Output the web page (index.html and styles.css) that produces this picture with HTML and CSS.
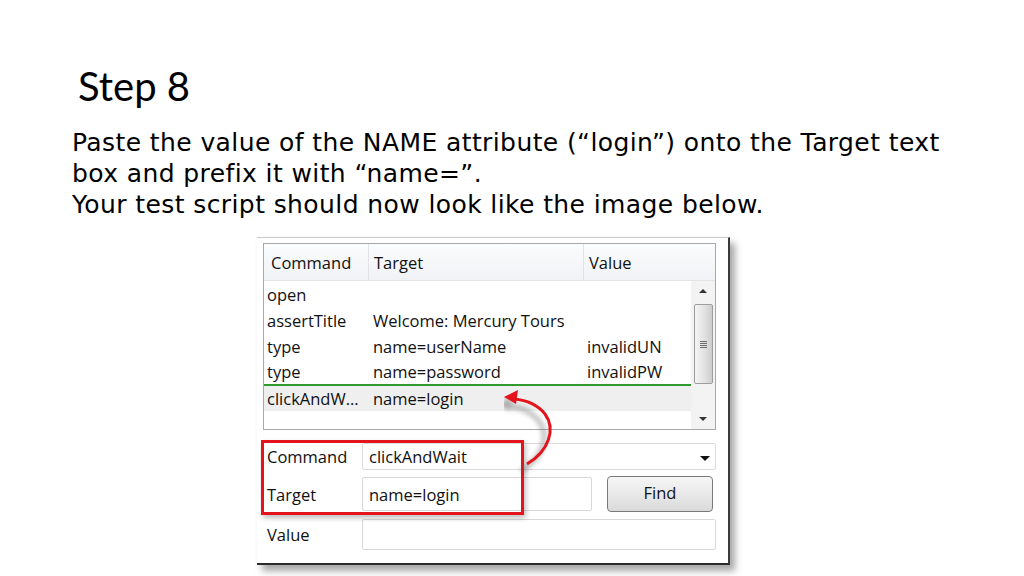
FILE: index.html
```html
<!DOCTYPE html>
<html>
<head>
<meta charset="utf-8">
<link rel="stylesheet" href="styles.css">
</head>
<body>
<div class="slide">
  <h1 class="title">Step 8</h1>
  <p class="lead">Paste the value of the NAME attribute (“login”) onto the Target text<br>box and prefix it with “name=”.<br>Your test script should now look like the image below.</p>
  <div class="shot">
    <div class="grid">
      <div class="grid-head">
        <div class="col c1">Command</div>
        <div class="col c2">Target</div>
        <div class="col c3">Value</div>
      </div>
      <div class="grid-body">
        <div class="rows">
          <div class="row"><span class="c1">open</span><span class="c2"></span><span class="c3"></span></div>
          <div class="row"><span class="c1">assertTitle</span><span class="c2">Welcome: Mercury Tours</span><span class="c3"></span></div>
          <div class="row"><span class="c1">type</span><span class="c2">name=userName</span><span class="c3">invalidUN</span></div>
          <div class="row row-drop"><span class="c1">type</span><span class="c2">name=password</span><span class="c3">invalidPW</span></div>
          <div class="row row-sel"><span class="c1">clickAndW...</span><span class="c2">name=login</span><span class="c3"></span></div>
        </div>
        <div class="scroll">
          <div class="arrow-up"></div>
          <div class="thumb"><div class="grip"></div></div>
          <div class="arrow-down"></div>
        </div>
      </div>
    </div>
    <div class="form">
      <div class="frow">
        <div class="flabel">Command</div>
        <div class="field combo">clickAndWait<span class="caret"></span></div>
      </div>
      <div class="frow frow-target">
        <div class="flabel">Target</div>
        <div class="field target">name=login</div>
        <div class="btn">Find</div>
      </div>
      <div class="frow frow-value">
        <div class="flabel">Value</div>
        <div class="field value"></div>
      </div>
    </div>
    <div class="redbox"></div>
    <svg class="curve" width="120" height="120" viewBox="0 0 120 120">
      <defs>
        <filter id="blur" x="-50%" y="-50%" width="200%" height="200%">
          <feGaussianBlur stdDeviation="2.5"/>
        </filter>
      </defs>
      <g filter="url(#blur)" transform="translate(-6 7)" opacity="0.45">
        <path d="M23 79 C45 66, 52 44, 41 29 C33 19, 22 15, 10 14" fill="none" stroke="#555" stroke-width="4"/>
        <path d="M0 12 L14 5 L12 19 Z" fill="#555"/>
      </g>
      <path d="M23 79 C45 66, 52 44, 41 29 C33 19, 22 15, 10 14" fill="none" stroke="#e3141b" stroke-width="3"/>
      <path d="M0 12 L14 5 L12 19 Z" fill="#e3141b"/>
    </svg>
  </div>
</div>
</body>
</html>
```

FILE: styles.css
```css
html, body {
  margin: 0;
  padding: 0;
  background: #ffffff;
}
.slide {
  width: 1024px;
  height: 576px;
  padding-left: 72px;
  box-sizing: border-box;
  overflow: hidden;
}
.title {
  margin: 62px 0 0 6px;
  font-family: Lato, "Open Sans", sans-serif;
  font-weight: 400;
  font-size: 40px;
  line-height: 48px;
  color: #000;
}
.lead {
  margin: 17px 0 0 0;
  font-family: "DejaVu Sans", Verdana, sans-serif;
  font-size: 25px;
  letter-spacing: 0.4px;
  line-height: 31px;
  color: #000;
  white-space: nowrap;
}
.shot {
  position: relative;
  margin: 17px 0 0 185px;
  width: 473px;
  height: 328px;
  box-sizing: border-box;
  border-top: 1px solid #c9c9c9;
  border-right: 2px solid #3a3a3a;
  border-bottom: 2px solid #2a2a2a;
  box-shadow: 5px 6px 7px rgba(0,0,0,0.35);
  padding: 5px 12px 0 6px;
  font-family: "Open Sans", "Noto Sans", sans-serif;
  font-size: 16.5px;
  color: #111;
  background: #fff;
}
.grid {
  border: 1px solid #a8a8a8;
  height: 187px;
  box-sizing: border-box;
  display: flex;
  flex-direction: column;
}
.grid-head {
  display: flex;
  height: 36px;
  background: linear-gradient(#fbfcfd, #f0f2f5);
  border-bottom: 1px solid #e2e4e8;
  flex: none;
}
.col {
  display: flex;
  align-items: center;
  padding-left: 7px;
  box-sizing: border-box;
  border-right: 1px solid #e0e2e6;
}
.grid-head .c1 { width: 105px; }
.grid-head .c2 { width: 215px; padding-left: 5px; }
.grid-head .c3 { flex: 1; border-right: none; padding-left: 5px; }
.grid-body {
  flex: 1;
  display: flex;
  min-height: 0;
}
.rows {
  flex: 1;
}
.row {
  display: flex;
  height: 26px;
  align-items: center;
  white-space: nowrap;
}
.row .c1 { width: 105px; padding-left: 3px; box-sizing: border-box; }
.row .c2 { width: 215px; padding-left: 4px; box-sizing: border-box; }
.row .c3 { flex: 1; padding-left: 3px; }
.row-drop {
  border-bottom: 2px solid #2f9a2f;
  height: 25px;
}
.row-sel {
  background: #efefef;
  height: 25px;
}
.scroll {
  width: 24px;
  flex: none;
  background: #f3f3f3;
  display: flex;
  flex-direction: column;
  align-items: center;
}
.arrow-up {
  margin-top: 8px;
  width: 0;
  height: 0;
  border-left: 4px solid transparent;
  border-right: 4px solid transparent;
  border-bottom: 4px solid #333;
}
.thumb {
  margin-top: 11px;
  width: 19px;
  height: 80px;
  box-sizing: border-box;
  border: 1px solid #9d9d9d;
  border-radius: 2px;
  background: linear-gradient(90deg, #f4f4f4, #e0e0e0 60%, #cdcdcd);
  display: flex;
  align-items: center;
  justify-content: center;
}
.grip {
  width: 7px;
  height: 7px;
  background: repeating-linear-gradient(#6a6a6a 0 1px, transparent 1px 2px);
}
.arrow-down {
  margin-top: auto;
  margin-bottom: 8px;
  width: 0;
  height: 0;
  border-left: 4px solid transparent;
  border-right: 4px solid transparent;
  border-top: 4px solid #333;
}
.form {
  padding: 13px 0 0 0;
}
.frow {
  display: flex;
  align-items: center;
  height: 27px;
}
.frow-target {
  margin-top: 6px;
  height: 36px;
}
.frow-value {
  margin-top: 7px;
  height: 31px;
}
.flabel {
  width: 99px;
  padding-left: 4px;
  box-sizing: border-box;
  flex: none;
}
.field {
  height: 100%;
  box-sizing: border-box;
  border: 1px solid #d8d8d8;
  border-radius: 2px;
  display: flex;
  align-items: center;
  padding-left: 6px;
  background: #fff;
}
.combo {
  flex: 1;
  position: relative;
  border-color: #dcdcdc;
}
.caret {
  position: absolute;
  right: 5px;
  top: 12px;
  width: 0;
  height: 0;
  border-left: 5px solid transparent;
  border-right: 5px solid transparent;
  border-top: 5px solid #111;
}
.target {
  width: 230px;
  height: 34px;
}
.btn {
  margin-left: 15px;
  width: 106px;
  height: 36px;
  box-sizing: border-box;
  border: 1px solid #7a7a7a;
  border-radius: 4px;
  background: linear-gradient(#f5f5f5, #e9e9e9 50%, #d9d9d9);
  display: flex;
  align-items: center;
  justify-content: center;
  padding-bottom: 4px;
}
.value {
  flex: 1;
}
.redbox {
  position: absolute;
  left: 4px;
  top: 202px;
  width: 263px;
  height: 75px;
  box-sizing: border-box;
  border: 3px solid #e3141b;
  box-shadow: 2px 3px 5px rgba(0,0,0,0.25);
}
.curve {
  position: absolute;
  left: 247px;
  top: 147px;
}
```
